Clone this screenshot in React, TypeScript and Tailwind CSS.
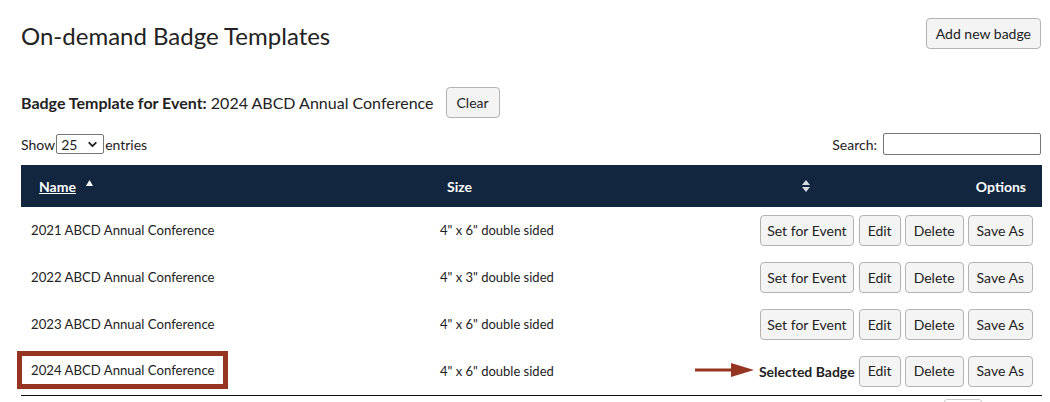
import { ChevronDown } from "lucide-react";

const rows = [
  { name: "2021 ABCD Annual Conference", size: '4" x 6" double sided', selected: false },
  { name: "2022 ABCD Annual Conference", size: '4" x 3" double sided', selected: false },
  { name: "2023 ABCD Annual Conference", size: '4" x 6" double sided', selected: false },
  { name: "2024 ABCD Annual Conference", size: '4" x 6" double sided', selected: true },
];

// padding is set per button
const btn =
  "inline-flex items-center whitespace-nowrap h-[31px] bg-[#f4f4f4] border border-[#b3b3b3] rounded-[4px] text-[14px] text-[#222] leading-none";

const App = () => {
  return (
    <div className="w-[1050px] h-[402px] overflow-hidden bg-white font-['Lato','Liberation_Sans',sans-serif] text-[#222] pl-[21px] pr-[9px]">
      <div className="flex justify-between items-start pt-[18px]">
        <h1 className="text-[24px] leading-[29px] mt-[3px]">On-demand Badge Templates</h1>
        <button className={`${btn} px-[9px]`}>Add new badge</button>
      </div>

      <div className="flex items-center mt-[37px] text-[16px]">
        <span className="whitespace-nowrap">
          <b>Badge Template for Event:</b> 2024 ABCD Annual Conference
        </span>
        <button className={`${btn} ml-[12px] px-[10px]`}>Clear</button>
      </div>

      <div className="flex justify-between items-center mt-[15px] text-[14px]">
        <div className="flex items-center gap-[1px]">
          <span>Show</span>
          <div className="flex items-center justify-between w-[48px] h-[20px] border border-[#767676] rounded-[2px] px-[4px]">
            <span>25</span>
            <ChevronDown size={13} strokeWidth={3.5} />
          </div>
          <span>entries</span>
        </div>
        <div className="flex items-center gap-[6px]">
          <span>Search:</span>
          <div className="w-[158px] h-[22px] border border-[#767676] rounded-[2px]" />
        </div>
      </div>

      <table className="mt-[10px] w-[1021px] table-fixed border-collapse border-b border-[#111] text-[13.2px]">
        <colgroup>
          <col className="w-[408px]" />
          <col className="w-[387px]" />
          <col className="w-[226px]" />
        </colgroup>
        <thead>
          <tr className="bg-[#12263f] text-white text-[14px] font-bold h-[42px]">
            <th className="text-left pl-[18px]">
              <span className="underline">Name</span>
              <svg width="7" height="6" viewBox="0 0 7 6" className="inline-block ml-[10px] mb-[9px]">
                <path d="M3.5 0L7 6H0z" fill="white" />
              </svg>
            </th>
            <th className="text-left pl-[18px] relative">
              Size
              <svg width="8" height="12" viewBox="0 0 8 12" className="absolute right-[6px] top-[15px]">
                <path d="M4 0L8 5H0z" fill="#d9dde3" />
                <path d="M4 12L8 7H0z" fill="#d9dde3" />
              </svg>
            </th>
            <th className="text-right pr-[16px]">Options</th>
          </tr>
        </thead>
        <tbody>
          {rows.map((r) => (
            <tr key={r.name} className="h-[47px]">
              <td className="pl-[10px] relative">
                {r.name}
                {r.selected && (
                  <div className="absolute left-[-4px] top-[3px] w-[211px] h-[38px] border-[5px] border-[#953421]" />
                )}
              </td>
              <td className="pl-[11px] text-[13px]">{r.size}</td>
              <td className="pr-[9px]">
                <div className="flex justify-end items-center gap-[4px]">
                  {r.selected ? (
                    <span className="relative whitespace-nowrap text-[14px] font-bold">
                      <svg width="60" height="16" viewBox="0 0 60 16" className="absolute left-[-64px] top-[1px]">
                        <path d="M0 6.5H38V9.5H0z" fill="#953421" />
                        <path d="M36 1L59 8L36 15z" fill="#953421" />
                      </svg>
                      Selected Badge
                    </span>
                  ) : (
                    <button className={`${btn} px-[6px] mr-[1px]`}>Set for Event</button>
                  )}
                  <button className={`${btn} px-[8px]`}>Edit</button>
                  <button className={`${btn} px-[8px]`}>Delete</button>
                  <button className={`${btn} px-[8px]`}>Save As</button>
                </div>
              </td>
            </tr>
          ))}
        </tbody>
      </table>

      <div className="flex justify-end pr-[59px] mt-[3px]">
        <div className="w-[38px] h-[20px] border border-[#c8c8c8] rounded-[3px]" />
      </div>
    </div>
  );
};

export default App;
